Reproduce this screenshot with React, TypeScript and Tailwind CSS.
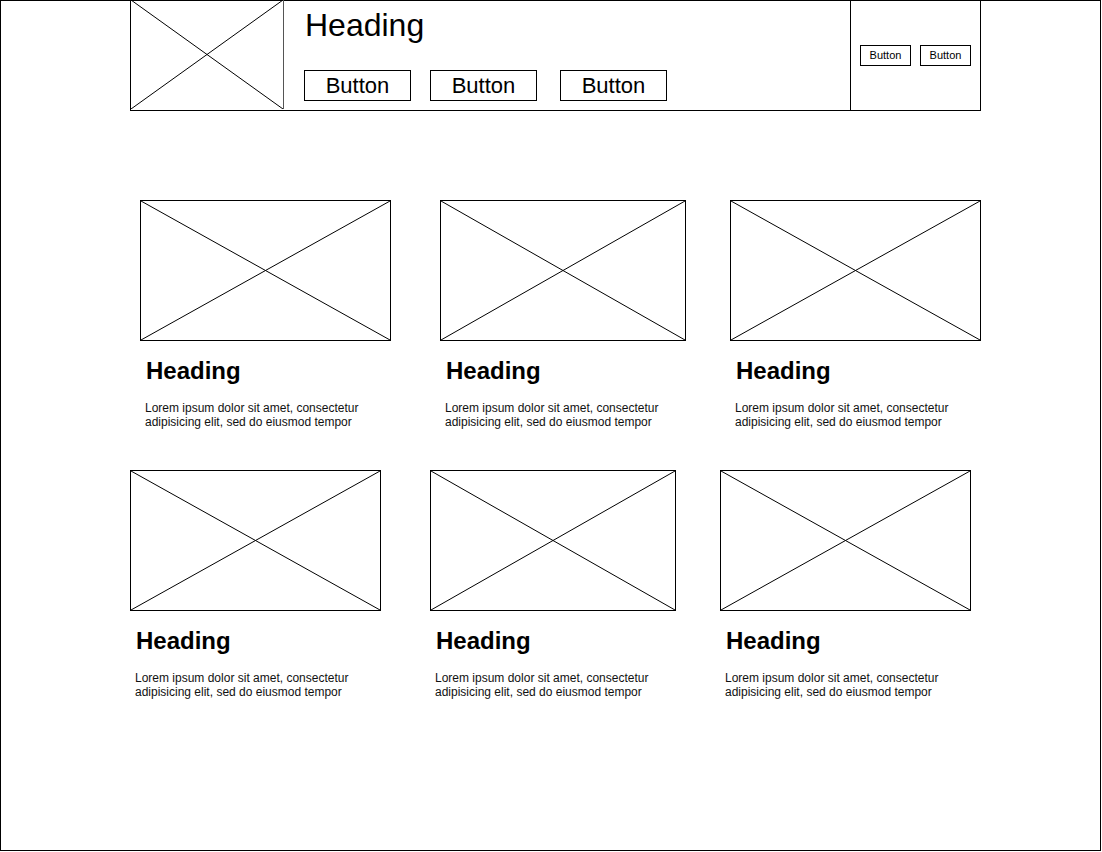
const FONT = { fontFamily: '"Liberation Sans", Arial, sans-serif' };

function Cross() {
  return (
    <svg className="block w-full h-full" viewBox="0 0 100 100" preserveAspectRatio="none">
      <line x1="0" y1="0" x2="100" y2="100" stroke="#000" strokeWidth="1" vectorEffect="non-scaling-stroke" />
      <line x1="100" y1="0" x2="0" y2="100" stroke="#000" strokeWidth="1" vectorEffect="non-scaling-stroke" />
    </svg>
  );
}

function Card({ width, className = "" }: { width: string; className?: string }) {
  return (
    <div className={`${width} ${className} shrink-0`}>
      <div className="h-[141px] border border-black">
        <Cross />
      </div>
      <h2 className="mt-[18px] pl-[6px] text-[24px] leading-none font-bold text-black">Heading</h2>
      <p className="mt-[18px] pl-[5px] text-[12px] leading-[14px] text-[#111]">
        Lorem ipsum dolor sit amet, consectetur
        <br />
        adipisicing elit, sed do eiusmod tempor
      </p>
    </div>
  );
}

export default function App() {
  return (
    <div className="w-[1101px] h-[851px] border border-black bg-white" style={FONT}>
      {/* Header */}
      <div className="ml-[129px] w-[851px] h-[110px] border-x border-b border-black flex">
        <div className="w-[153px] h-full border-r border-[#555] -mt-px">
          <Cross />
        </div>
        <div className="w-[567px] border-r border-black pl-[19px]">
          <h1 className="pt-[8px] pl-[2px] text-[32px] leading-none text-black">Heading</h1>
          <div className="mt-[29px] flex">
            <button className="w-[107px] h-[31px] border border-black text-[22px] leading-none ml-px">Button</button>
            <button className="w-[107px] h-[31px] border border-black text-[22px] leading-none ml-[19px]">Button</button>
            <button className="w-[107px] h-[31px] border border-black text-[22px] leading-none ml-[23px]">Button</button>
          </div>
        </div>
        <div className="flex-1 flex items-center pl-[9px] gap-[9px] -mt-px">
          <button className="w-[51px] h-[21px] border border-black text-[11px] leading-none">Button</button>
          <button className="w-[51px] h-[21px] border border-black text-[11px] leading-none">Button</button>
        </div>
      </div>

      {/* Row 1 */}
      <div className="mt-[89px] ml-[139px] flex">
        <Card width="w-[251px]" />
        <Card width="w-[246px]" className="ml-[49px]" />
        <Card width="w-[251px]" className="ml-[44px]" />
      </div>

      {/* Row 2 */}
      <div className="mt-[41px] ml-[129px] flex">
        <Card width="w-[251px]" />
        <Card width="w-[246px]" className="ml-[49px]" />
        <Card width="w-[251px]" className="ml-[44px]" />
      </div>
    </div>
  );
}
